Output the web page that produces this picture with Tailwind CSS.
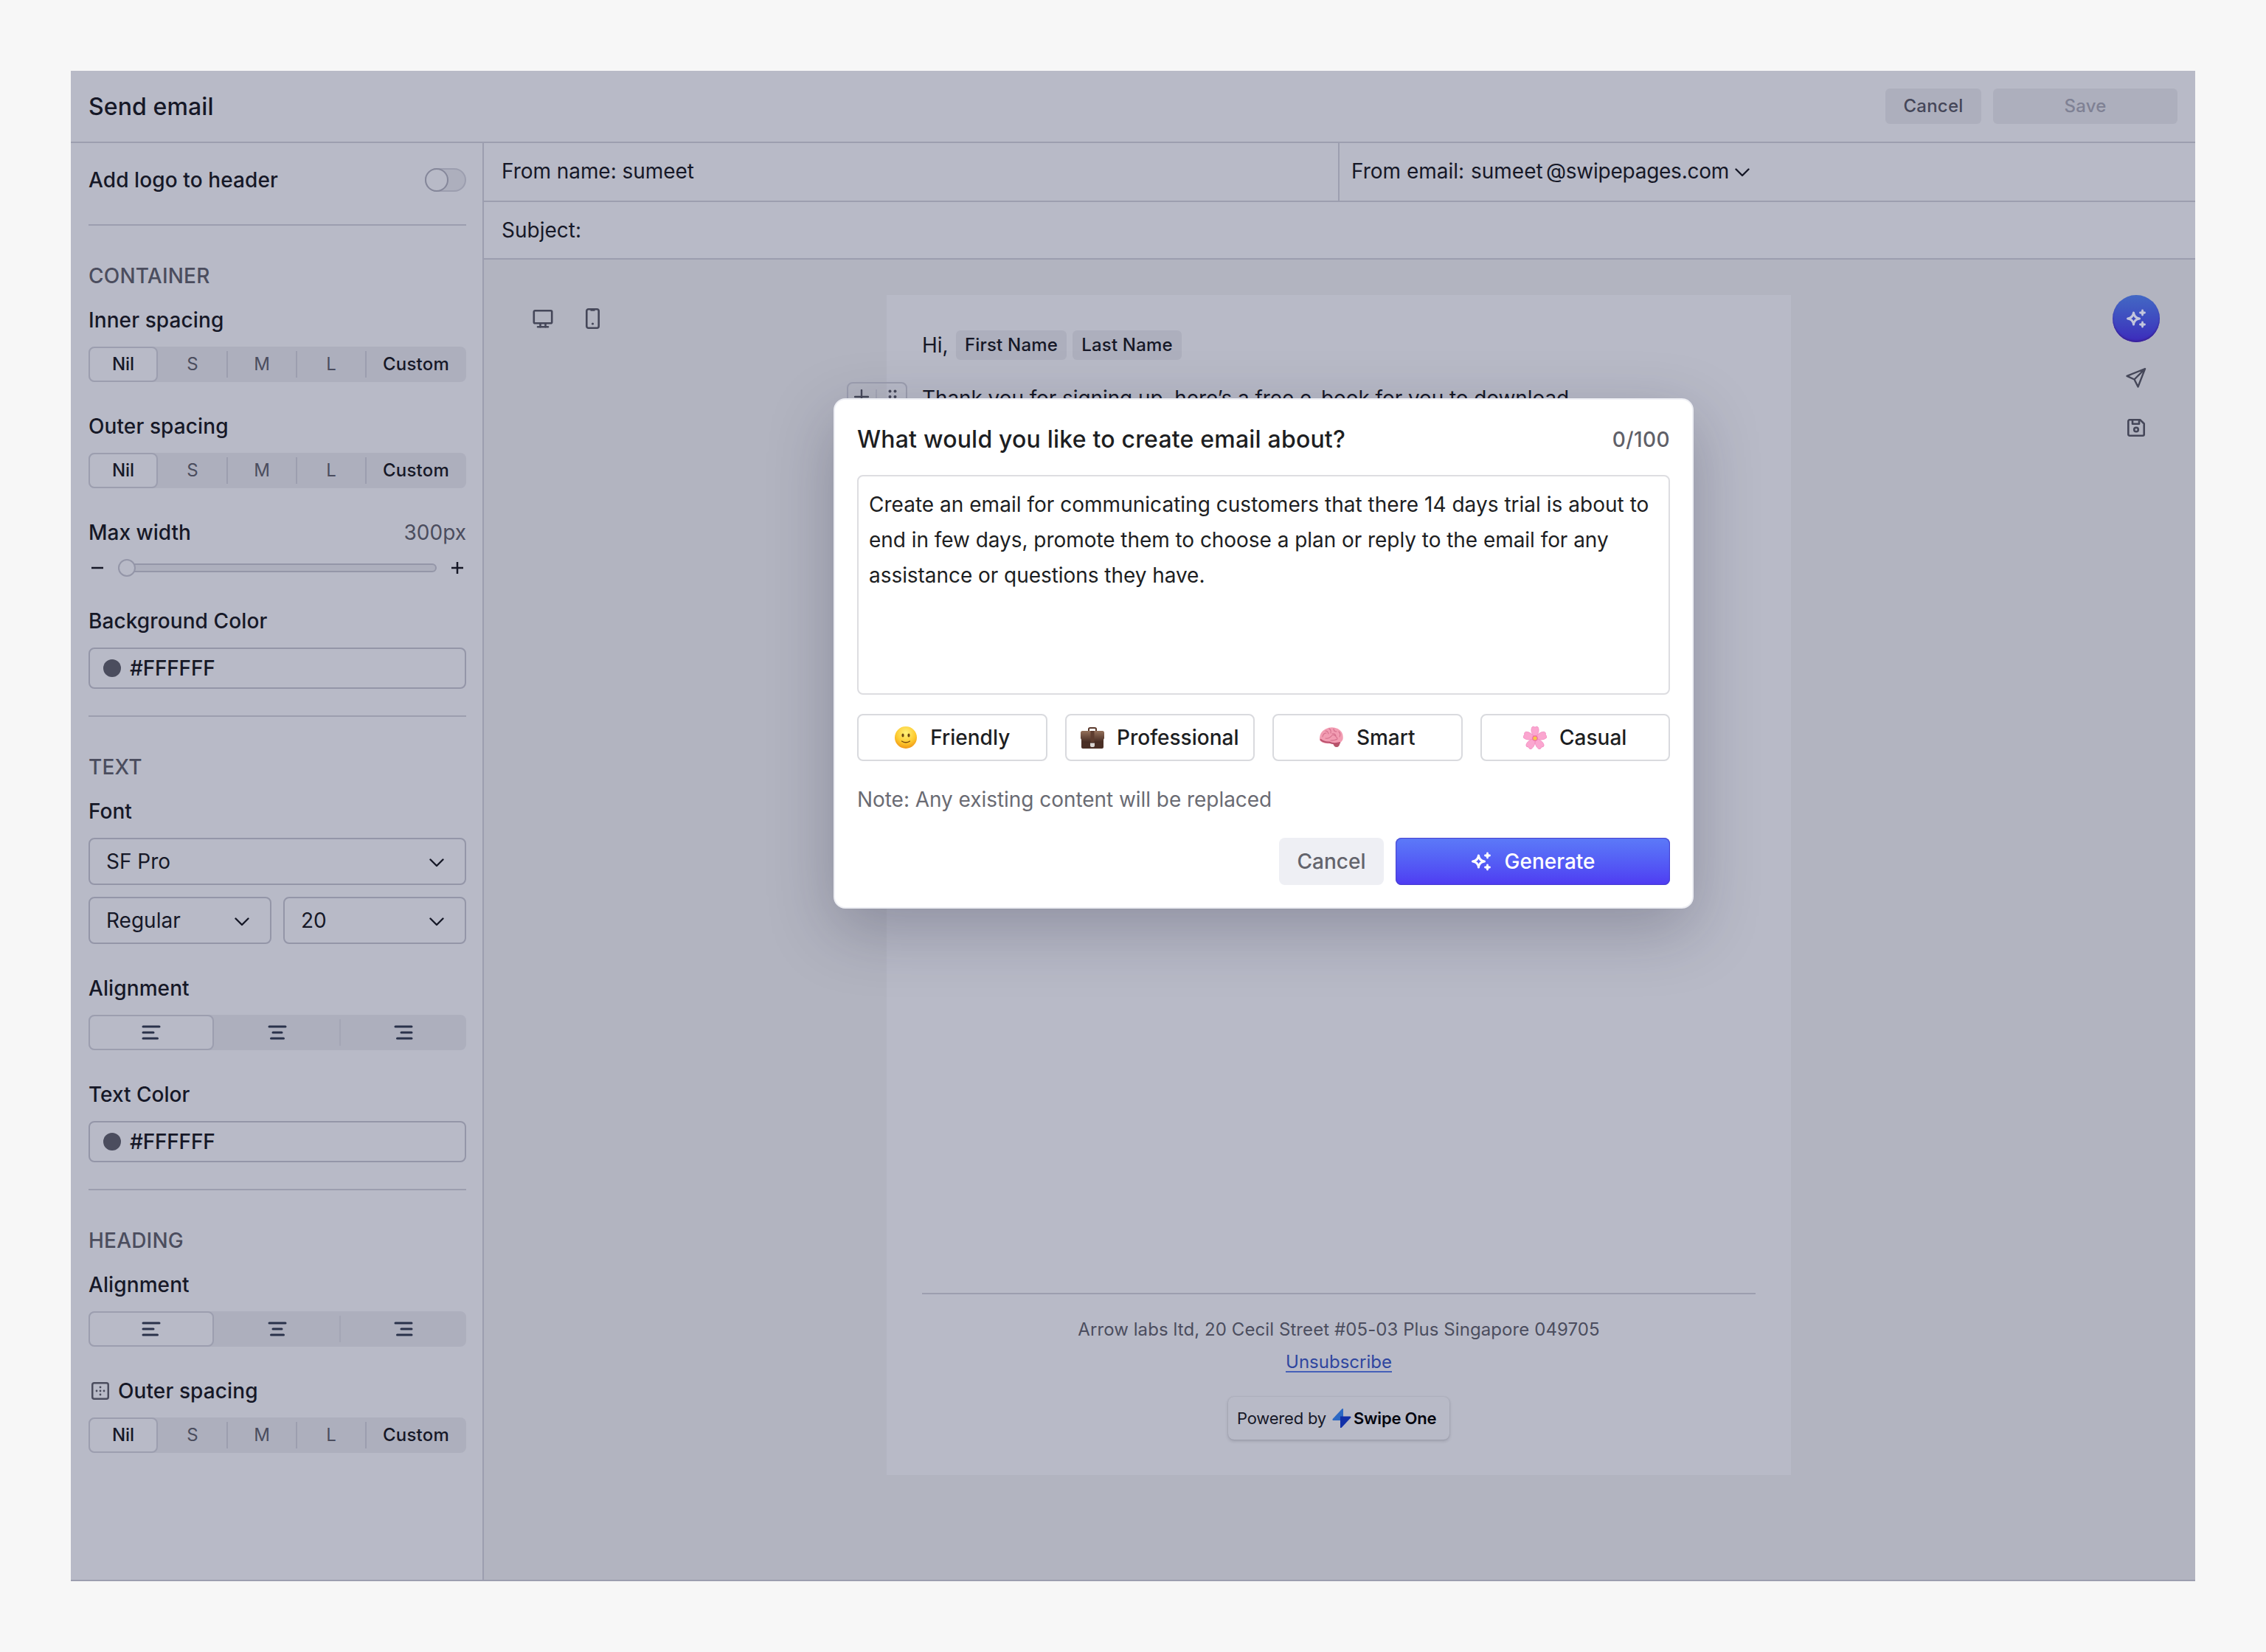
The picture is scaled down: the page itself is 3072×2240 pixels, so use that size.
<!DOCTYPE html>
<html lang="en">
<head>
  <meta charset="UTF-8" />
  <title>Send email</title>
  <script src="https://cdn.jsdelivr.net/npm/@tailwindcss/browser@4"></script>
</head>
<body class="w-[3072px] h-[2240px] overflow-hidden bg-[#f7f7f7] p-24 font-['Inter','Liberation_Sans',sans-serif] text-[28px] leading-10 text-[#161827]">

  <!-- shared icons -->
  <svg class="hidden">
    <symbol id="chevron" viewBox="0 0 20 12"><path d="M1.5 1.5 10 10l8.500-8.500" fill="none" stroke="currentColor" stroke-width="2.400" stroke-linecap="round" stroke-linejoin="round" /></symbol>
    <symbol id="sparkles" viewBox="0 0 28 28">
      <path d="M10.500 6Q11.400 13.100 18.500 14Q11.400 14.900 10.500 22Q9.600 14.900 2.500 14Q9.600 13.100 10.500 6Z" fill="none" stroke="currentColor" stroke-width="3" stroke-linejoin="round" />
      <path d="M22.500 3v6M19.500 6h6M22.500 19v6M19.500 22h6" fill="none" stroke="currentColor" stroke-width="2.800" stroke-linecap="round" />
      <path d="M20.700 4.200h3.600v3.600h-3.600zM20.700 20.200h3.600v3.600h-3.600z" fill="currentColor" />
    </symbol>
    <symbol id="align-left" viewBox="0 0 26 20"><path d="M2 2h22M2 10h14M2 18h19.500" fill="none" stroke="currentColor" stroke-width="3" stroke-linecap="round" /></symbol>
    <symbol id="align-center" viewBox="0 0 26 20"><path d="M2 2h22M7 10h12M4.500 18h17" fill="none" stroke="currentColor" stroke-width="3" stroke-linecap="round" /></symbol>
    <symbol id="align-right" viewBox="0 0 26 20"><path d="M2 2h22M10 10h14M4.500 18H24" fill="none" stroke="currentColor" stroke-width="3" stroke-linecap="round" /></symbol>
  </svg>

  <div class="relative w-[2880px] h-[2048px] flex flex-col bg-[#b8bac7] border-b-2 border-[#9c9eaf]">

    <header class="h-[98px] shrink-0 flex items-center justify-between px-6 border-b-2 border-[#9c9eaf]">
      <h1 class="pt-0.5 text-[32px] font-medium tracking-[0.1px]">Send email</h1>
      <div class="flex gap-4 text-[24px] font-[450] tracking-[0.2px]">
        <button class="w-[130px] h-12 rounded-md bg-[#adafbd] text-[#454759]">Cancel</button>
        <button class="w-[250px] h-12 rounded-md bg-[#adafbd] text-[#7f8194]">Save</button>
      </div>
    </header>

    <div class="flex flex-1 min-h-0">

      <!-- settings panel -->
      <aside class="w-[560px] shrink-0 flex flex-col pl-6 pr-[22px] border-r-2 border-[#9c9eaf] font-medium">
        <div class="h-[100px] flex items-center justify-between">
          <span class="tracking-[0.1px]">Add logo to header</span>
          <div class="w-14 h-8 rounded-full bg-[#adafbd] border-2 border-[#9c9eaf] relative">
            <div class="absolute -left-0.5 -top-0.5 w-8 h-8 rounded-full bg-[#b8bac7] border-2 border-[#85879a]"></div>
          </div>
        </div>
        <div class="mt-2.5 h-0.5 bg-[#9c9eaf]"></div>

        <h2 class="mt-12 text-[#4b4d5e] font-[450] tracking-[0.2px]">CONTAINER</h2>
        <p class="mt-5 tracking-[0.1px]">Inner spacing</p>
        <div class="mt-4 h-12 flex items-center rounded-lg bg-[#adafbd] text-[24px] text-center text-[#4b4d5e] font-normal">
          <span class="w-[94px] h-12 leading-[44px] rounded-lg bg-[#b8bac7] border-2 border-[#9c9eaf] text-[#161827] font-medium">Nil</span>
          <span class="w-[94px]">S</span><i class="w-0.5 h-9 -mx-px bg-[#9c9eaf]"></i>
          <span class="w-[94px]">M</span><i class="w-0.5 h-9 -mx-px bg-[#9c9eaf]"></i>
          <span class="w-[94px]">L</span><i class="w-0.5 h-9 -mx-px bg-[#9c9eaf]"></i>
          <span class="flex-1 text-[#161827] font-[450] tracking-[0.2px]">Custom</span>
        </div>

        <p class="mt-10 tracking-[0.1px]">Outer spacing</p>
        <div class="mt-4 h-12 flex items-center rounded-lg bg-[#adafbd] text-[24px] text-center text-[#4b4d5e] font-normal">
          <span class="w-[94px] h-12 leading-[44px] rounded-lg bg-[#b8bac7] border-2 border-[#9c9eaf] text-[#161827] font-medium">Nil</span>
          <span class="w-[94px]">S</span><i class="w-0.5 h-9 -mx-px bg-[#9c9eaf]"></i>
          <span class="w-[94px]">M</span><i class="w-0.5 h-9 -mx-px bg-[#9c9eaf]"></i>
          <span class="w-[94px]">L</span><i class="w-0.5 h-9 -mx-px bg-[#9c9eaf]"></i>
          <span class="flex-1 text-[#161827] font-[450] tracking-[0.2px]">Custom</span>
        </div>

        <div class="mt-10 flex justify-between"><p>Max width</p><p class="text-[#4b4d5e] font-normal">300px</p></div>
        <div class="mt-4 h-6 flex items-center justify-between px-1">
          <svg class="w-4 h-4" viewBox="0 0 16 16"><path d="M0 8h16" stroke="currentColor" stroke-width="2.500" /></svg>
          <div class="w-[432px] h-3 rounded-full bg-[#adafbd] border-2 border-[#9496a8] relative">
            <div class="absolute -left-0.5 -top-2 w-6 h-6 rounded-full bg-[#b8bac7] border-2 border-[#9496a8]"></div>
          </div>
          <svg class="w-4 h-4" viewBox="0 0 16 16"><path d="M0 8h16M8 0v16" stroke="currentColor" stroke-width="2.500" /></svg>
        </div>

        <p class="mt-10 tracking-[0.1px]">Background Color</p>
        <div class="mt-4 h-14 flex items-center gap-3 px-[18px] rounded-lg border-2 border-[#9496a8]">
          <span class="w-6 h-6 rounded-full bg-[#4b4d5e]"></span><span class="-tracking-[0.2px]">#FFFFFF</span>
        </div>
        <div class="mt-9 h-0.5 bg-[#9c9eaf]"></div>

        <h2 class="mt-12 text-[#4b4d5e] font-[450] tracking-[0.2px]">TEXT</h2>
        <p class="mt-5">Font</p>
        <div class="mt-4 h-16 flex items-center justify-between pl-[22px] pr-7 rounded-lg border-2 border-[#9496a8] font-normal">
          <span>SF Pro</span><svg class="w-5 h-3 mt-1"><use href="#chevron" /></svg>
        </div>
        <div class="mt-4 flex gap-4 font-normal">
          <div class="flex-1 h-16 flex items-center justify-between pl-[22px] pr-7 rounded-lg border-2 border-[#9496a8]">
            <span>Regular</span><svg class="w-5 h-3 mt-1"><use href="#chevron" /></svg>
          </div>
          <div class="flex-1 h-16 flex items-center justify-between pl-[22px] pr-7 rounded-lg border-2 border-[#9496a8]">
            <span>20</span><svg class="w-5 h-3 mt-1"><use href="#chevron" /></svg>
          </div>
        </div>

        <p class="mt-10 tracking-[0.1px]">Alignment</p>
        <div class="mt-4 h-12 flex items-center rounded-lg bg-[#adafbd] text-[#2a324b]">
          <span class="w-[170px] h-12 flex items-center justify-center rounded-lg bg-[#b8bac7] border-2 border-[#9c9eaf]"><svg class="w-[26px] h-5"><use href="#align-left" /></svg></span>
          <span class="w-[171px] flex justify-center"><svg class="w-[26px] h-5"><use href="#align-center" /></svg></span>
          <i class="w-0.5 h-9 -mx-px bg-[#a4a6b5]"></i>
          <span class="flex-1 flex justify-center"><svg class="w-[26px] h-5"><use href="#align-right" /></svg></span>
        </div>

        <p class="mt-10">Text Color</p>
        <div class="mt-4 h-14 flex items-center gap-3 px-[18px] rounded-lg border-2 border-[#9496a8]">
          <span class="w-6 h-6 rounded-full bg-[#4b4d5e]"></span><span class="-tracking-[0.2px]">#FFFFFF</span>
        </div>
        <div class="mt-9 h-0.5 bg-[#9c9eaf]"></div>

        <h2 class="mt-12 text-[#4b4d5e] font-[450] tracking-[0.2px]">HEADING</h2>
        <p class="mt-5 tracking-[0.1px]">Alignment</p>
        <div class="mt-4 h-12 flex items-center rounded-lg bg-[#adafbd] text-[#2a324b]">
          <span class="w-[170px] h-12 flex items-center justify-center rounded-lg bg-[#b8bac7] border-2 border-[#9c9eaf]"><svg class="w-[26px] h-5"><use href="#align-left" /></svg></span>
          <span class="w-[171px] flex justify-center"><svg class="w-[26px] h-5"><use href="#align-center" /></svg></span>
          <i class="w-0.5 h-9 -mx-px bg-[#a4a6b5]"></i>
          <span class="flex-1 flex justify-center"><svg class="w-[26px] h-5"><use href="#align-right" /></svg></span>
        </div>

        <div class="mt-10 flex items-center gap-3 pl-1">
          <svg class="w-6 h-6 text-[#4b4d5e]" viewBox="0 0 24 24" fill="currentColor">
            <rect x="1.250" y="1.250" width="21.500" height="21.500" rx="2.500" fill="none" stroke="currentColor" stroke-width="2.500" />
            <circle cx="12" cy="7" r="1.400" /><circle cx="7" cy="12" r="1.400" /><circle cx="12" cy="12" r="1.400" /><circle cx="17" cy="12" r="1.400" /><circle cx="12" cy="17" r="1.400" />
          </svg>
          <p class="tracking-[0.1px]">Outer spacing</p>
        </div>
        <div class="mt-4 h-12 flex items-center rounded-lg bg-[#adafbd] text-[24px] text-center text-[#4b4d5e] font-normal">
          <span class="w-[94px] h-12 leading-[44px] rounded-lg bg-[#b8bac7] border-2 border-[#9c9eaf] text-[#161827] font-medium">Nil</span>
          <span class="w-[94px]">S</span><i class="w-0.5 h-9 -mx-px bg-[#9c9eaf]"></i>
          <span class="w-[94px]">M</span><i class="w-0.5 h-9 -mx-px bg-[#9c9eaf]"></i>
          <span class="w-[94px]">L</span><i class="w-0.5 h-9 -mx-px bg-[#9c9eaf]"></i>
          <span class="flex-1 text-[#161827] font-[450] tracking-[0.2px]">Custom</span>
        </div>
      </aside>

      <main class="flex-1 flex flex-col">
        <div class="h-20 flex border-b-2 border-[#9c9eaf] leading-[38px]">
          <div class="w-[1160px] flex items-center pl-6 pb-0.5 border-r-2 border-[#9c9eaf] -tracking-[0.05px]">From name: sumeet</div>
          <div class="flex items-center pl-4 pb-0.5">
            <span class="w-[162px]">From email:</span><span class="w-[102px]">sumeet</span><span class="-tracking-[0.25px]">@swipepages.com</span>
            <svg class="w-5 h-3 mt-1 ml-2"><use href="#chevron" /></svg>
          </div>
        </div>
        <div class="h-[78px] flex items-center pl-6 border-b-2 border-[#9c9eaf]">Subject:</div>

        <div class="flex-1 flex bg-[#b2b4c0] pt-12">
          <!-- device switch -->
          <div class="w-[546px] h-16 flex items-center pl-[66px] gap-[42px] text-[#454759]">
            <svg class="w-7 h-7" viewBox="0 0 28 28" fill="none" stroke="currentColor" stroke-width="2.600" stroke-linejoin="round">
              <rect x="1.800" y="3.300" width="24.400" height="17" rx="1.500" /><path d="M10.500 20.500v5M17.500 20.500v5M7 25.300h14" stroke-linecap="round" />
            </svg>
            <svg class="w-7 h-7" viewBox="0 0 28 28" fill="none" stroke="currentColor" stroke-width="2.600" stroke-linejoin="round">
              <rect x="3.300" y="1.300" width="16.400" height="25.400" rx="2.500" /><path d="M8.500 1.500h6v2.200h-6z" fill="currentColor" stroke="none" /><circle cx="11.500" cy="21" r="1.600" fill="currentColor" stroke="none" />
            </svg>
          </div>

          <!-- email preview -->
          <article class="relative w-[1226px] h-[1600px] flex flex-col p-12 bg-[#b8bac7]">
            <div class="h-10 flex items-center gap-2">
              <span class="w-[38px]">Hi,</span>
              <span class="w-[150px] h-10 rounded-md bg-[#adafbd] text-[24px] font-[450] tracking-[0.2px] text-center">First Name</span>
              <span class="w-[148px] h-10 rounded-md bg-[#adafbd] text-[24px] font-[450] tracking-[0.2px] text-center">Last Name</span>
            </div>
            <p class="mt-8 whitespace-nowrap -tracking-[0.09px]">Thank you for signing up, here’s a free e-book for you to download.</p>
            <div class="absolute -left-[54px] top-[118px] w-[82px] h-10 pl-2 flex items-center gap-[9px] rounded-lg border-2 border-[#9c9eaf] text-[#454759]">
              <svg class="w-5 h-5" viewBox="0 0 20 20"><path d="M1 10h18M10 1v18" stroke="currentColor" stroke-width="2.400" stroke-linecap="round" /></svg>
              <i class="w-0.5 h-5 bg-[#a4a6b5]"></i>
              <svg class="w-4 h-6 ml-1" viewBox="0 0 16 24" fill="currentColor"><circle cx="4.500" cy="4.500" r="2" /><circle cx="11.500" cy="4.500" r="2" /><circle cx="4.500" cy="12" r="2" /><circle cx="11.500" cy="12" r="2" /><circle cx="4.500" cy="19.500" r="2" /><circle cx="11.500" cy="19.500" r="2" /></svg>
            </div>

            <footer class="mt-auto flex flex-col items-center border-t-2 border-[#9c9eaf] pt-7 text-[24px] text-[#4b4d5e]">
              <p class="tracking-[0.08px]">Arrow labs ltd, 20 Cecil Street #05-03 Plus Singapore 049705</p>
              <a class="mt-1 h-[34px] leading-10 border-b-2 border-[#4560b8] text-[#2f469f]">Unsubscribe</a>
              <div class="mt-[33px] w-[300px] h-[58px] flex items-center pl-3 rounded-lg shadow-[0_2px_4px_rgba(22,24,39,0.18),0_0_2px_rgba(22,24,39,0.12)] text-[22px] text-[#161827] -tracking-[0.2px]">
                Powered by
                <svg class="w-[26px] h-[26px] ml-2" viewBox="0 0 26 26">
                  <path d="M15 0v10.500L13.500 16H1.300Q0 15.500.7 14L13 .7Q14.200-.4 15 0Z" fill="#2c68c4" />
                  <path d="M11 26V10.500h13.500q1.500.5.6 2L13.200 25.300Q12 26.500 11 26Z" fill="#1230a8" />
                </svg>
                <span class="ml-[3px] font-semibold text-[#05060f]">Swipe One</span>
              </div>
            </footer>
          </article>

          <!-- actions -->
          <div class="flex-1 flex flex-col items-end pr-12">
            <div class="w-16 h-16 rounded-full flex items-center justify-center bg-linear-to-b from-[#4368c4] to-[#3c28bb] shadow-[inset_0_-2px_2px_#3a2398] text-[#c3c6dc]"><svg class="w-7 h-7"><use href="#sparkles" /></svg></div>
            <div class="w-16 mt-[34px] flex flex-col items-center text-[#454759]">
              <svg class="w-7 h-7" viewBox="0 0 28 28" fill="none" stroke="currentColor" stroke-width="2.400" stroke-linejoin="round"><path d="M26 2 1.500 11.800 11.500 16.500 16.500 26.500ZM26 2 11.500 16.500" /></svg>
              <svg class="w-7 h-7 mt-10" viewBox="0 0 28 28" fill="none" stroke="currentColor" stroke-width="2.600" stroke-linejoin="round"><path d="M5 3.300h14.500L24.700 8.500V23a1.700 1.700 0 0 1-1.700 1.700H5A1.700 1.700 0 0 1 3.300 23V5A1.700 1.700 0 0 1 5 3.300ZM9 3.500v5.200h9V3.500" /><circle cx="14" cy="16.500" r="2.800" /></svg>
            </div>
          </div>
        </div>
      </main>
    </div>

    <!-- generate dialog -->
    <div class="absolute left-[1034px] top-[444px] w-[1166px] h-[692px] flex flex-col px-[30px] rounded-2xl bg-white border-2 border-[#eeeff4] shadow-[0_28px_88px_rgba(22,24,50,0.26)] text-[#1d1e22]">
      <div class="mt-[34px] flex items-center justify-between">
        <h2 class="text-[32px] font-medium tracking-[0.2px]">What would you like to create email about?</h2>
        <span class="text-[#5f6068] font-[450] tracking-[0.4px]">0/100</span>
      </div>
      <div class="mt-7 h-[298px] px-3.5 pt-[14px] rounded-lg border-2 border-[#dddde1] leading-[48px] whitespace-nowrap"><span class="tracking-[0.02px]">Create an email for communicating customers that there 14 days trial is about to</span><br /><span class="-tracking-[0.05px]">end in few days, promote them to choose a plan or reply to the email for any<br />assistance or questions they have.</span></div>
      <div class="mt-[26px] h-16 shrink-0 grid grid-cols-4 gap-6 font-medium">
        <button class="flex items-center justify-center gap-[17px] rounded-lg border-2 border-[#d9dade]">
          <svg class="w-8 h-8" viewBox="0 0 32 32">
            <defs><radialGradient id="face" cx=".5" cy=".3" r=".75"><stop offset="0" stop-color="#fff27a" /><stop offset=".6" stop-color="#fdc92e" /><stop offset="1" stop-color="#ee8d12" /></radialGradient></defs>
            <circle cx="16" cy="16" r="15" fill="url(#face)" />
            <ellipse cx="12" cy="13" rx="1.600" ry="2.500" fill="#6b4411" /><ellipse cx="20" cy="13" rx="1.600" ry="2.500" fill="#6b4411" />
            <path d="M10.500 21q5.500 3.500 11 0" fill="none" stroke="#7a4a10" stroke-width="1.300" stroke-linecap="round" />
          </svg>
          Friendly
        </button>
        <button class="flex items-center justify-center gap-[17px] rounded-lg border-2 border-[#d9dade]">
          <svg class="w-8 h-8" viewBox="0 0 32 32">
            <defs><linearGradient id="bag" x2="0" y2="1"><stop offset="0" stop-color="#94705a" /><stop offset="1" stop-color="#432920" /></linearGradient></defs>
            <path d="M11 7V4.500Q11 3 13 3h6q2 0 2 1.500V7" fill="none" stroke="#5b3a2d" stroke-width="2" />
            <rect x="1" y="8" width="30" height="23" rx="2" fill="#4a2f25" />
            <path d="M0 9.500Q0 7 2.500 7h27Q32 7 32 9.500V17q-2 6-10 6H10Q2 23 0 17Z" fill="url(#bag)" />
            <path d="M13.500 7h5v15h-5z" fill="#5e3d2f" /><path d="M13 23.500h6V27q0 2-3 2t-3-2z" fill="#d9d5d2" />
          </svg>
          Professional
        </button>
        <button class="flex items-center justify-center gap-[18px] rounded-lg border-2 border-[#d9dade]">
          <svg class="w-8 h-8" viewBox="0 0 32 32">
            <path d="M18 23q1 6 5 6t4.500-6z" fill="#b5556a" />
            <path d="M0 19Q-.5 9 8 4.500q8-4 16.500-.5Q33 8.500 31.500 18.500 29 25 21 24.500L15 24Q2 25 0 19Z" fill="#f29cb2" />
            <path d="M1 18.500q5 4.500 12 4 6 3 15 .5" fill="none" stroke="#b9506c" stroke-width="2" />
            <path d="M4 15q1-5 5-5M8 7q3 0 4 4M13 4q3 2 2 6M19 4q0 4 4 4M17 11q4-1 5 3M26 8q3 3 1 7M8 17q5 1 8-3t8 3M15 20q6 0 9-2" fill="none" stroke="#d4708d" stroke-width="1.100" stroke-linecap="round" />
          </svg>
          Smart
        </button>
        <button class="flex items-center justify-center gap-[17px] rounded-lg border-2 border-[#d9dade]">
          <svg class="w-8 h-8" viewBox="0 0 32 32">
            <g fill="#fba6d0" stroke="#ee7fb8" stroke-width=".6">
              <path id="petal" d="M16 17Q9 9 11.500 2.500 13 0 16 2q3-2 4.500.5Q23 9 16 17Z" />
              <use href="#petal" transform="rotate(72 16 17)" /><use href="#petal" transform="rotate(144 16 17)" /><use href="#petal" transform="rotate(216 16 17)" /><use href="#petal" transform="rotate(288 16 17)" />
            </g>
            <circle cx="16" cy="17" r="3.800" fill="#ee6ba3" /><circle cx="16" cy="17" r="2.600" fill="#f7c948" />
          </svg>
          Casual
        </button>
      </div>
      <p class="mt-8 text-[#6a6b73] -tracking-[0.05px]">Note: Any existing content will be replaced</p>
      <div class="mt-8 flex justify-end gap-4 font-medium">
        <button class="w-[142px] h-16 rounded-lg bg-[#eeeff4] text-[#63646c]">Cancel</button>
        <button class="w-[372px] h-16 flex items-center justify-center gap-[18px] rounded-lg bg-linear-to-b from-[#5c7af8] to-[#4f3af2] shadow-[inset_0_0_1px_1px_#4540cc] text-white"><svg class="w-7 h-7"><use href="#sparkles" /></svg>Generate</button>
      </div>
    </div>
  </div>

</body>
</html>
